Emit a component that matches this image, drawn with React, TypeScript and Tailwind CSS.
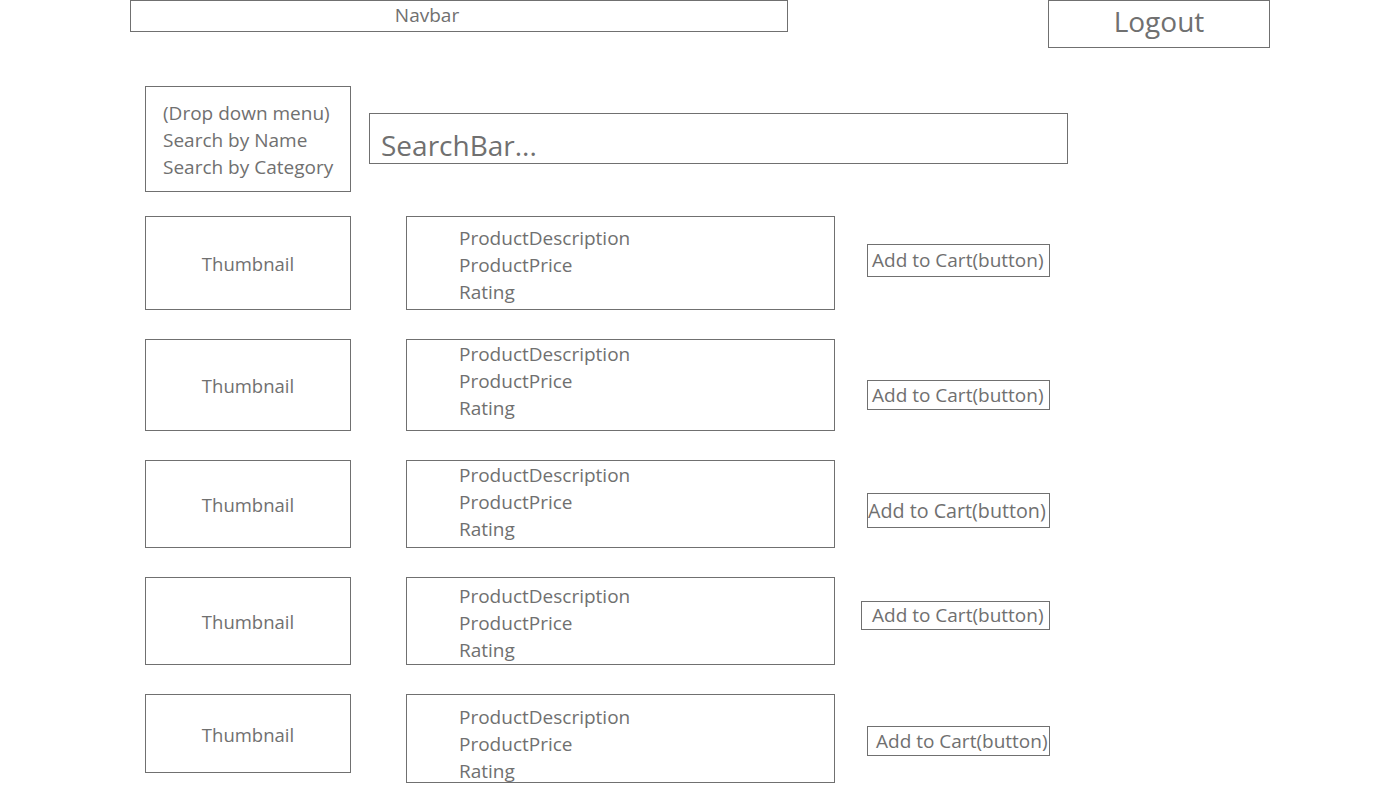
const font = { fontFamily: '"Open Sans", "Noto Sans", sans-serif' };

type Row = {
  mt: string;
  thumbH: string;
  descH: string;
  descPt: string;
  btnMt: string;
  btnH: string;
  btnMl: string;
  btnW: string;
  btnText: string;
  btnPl: string;
};

const rows: Row[] = [
  { mt: "mt-[24px]", thumbH: "h-[94px]", descH: "h-[94px]", descPt: "pt-[8px]", btnMt: "mt-[28px]", btnH: "h-[33px]", btnMl: "ml-[32px]", btnW: "w-[183px]", btnText: "text-[19px]", btnPl: "pl-[4px]" },
  { mt: "mt-[29px]", thumbH: "h-[92px]", descH: "h-[92px]", descPt: "pt-[1px]", btnMt: "mt-[41px]", btnH: "h-[30px]", btnMl: "ml-[32px]", btnW: "w-[183px]", btnText: "text-[19px]", btnPl: "pl-[4px]" },
  { mt: "mt-[29px]", thumbH: "h-[88px]", descH: "h-[88px]", descPt: "pt-[1px]", btnMt: "mt-[33px]", btnH: "h-[35px]", btnMl: "ml-[32px]", btnW: "w-[183px]", btnText: "text-[19.7px]", btnPl: "pl-0" },
  { mt: "mt-[29px]", thumbH: "h-[88px]", descH: "h-[88px]", descPt: "pt-[5px]", btnMt: "mt-[24px]", btnH: "h-[29px]", btnMl: "ml-[26px]", btnW: "w-[189px]", btnText: "text-[19px]", btnPl: "pl-[10px]" },
  { mt: "mt-[29px]", thumbH: "h-[79px]", descH: "h-[89px]", descPt: "pt-[9px]", btnMt: "mt-[32px]", btnH: "h-[30px]", btnMl: "ml-[32px]", btnW: "w-[183px]", btnText: "text-[19px]", btnPl: "pl-[8px]" },
];

const ProductRow = ({ row }: { row: Row }) => {
  return (
    <div className={`flex items-start ml-[145px] ${row.mt}`}>
      {/* Thumbnail */}
      <div className={`w-[206px] ${row.thumbH} border border-[#707070] flex items-center justify-center text-[18.5px] text-[#707070] pt-[2px]`}>
        Thumbnail
      </div>

      {/* Product info */}
      <div className={`ml-[55px] w-[429px] ${row.descH} ${row.descPt} border border-[#707070] pl-[52px] text-[19px] leading-[27px] text-[#707070] overflow-hidden`}>
        <div>ProductDescription</div>
        <div>ProductPrice</div>
        <div>Rating</div>
      </div>

      {/* Add to cart */}
      <button
        className={`${row.btnMl} ${row.btnMt} ${row.btnW} ${row.btnH} ${row.btnPl} ${row.btnText} border border-[#707070] text-[#707070] flex items-center whitespace-nowrap overflow-hidden leading-none`}
      >
        Add to Cart(button)
      </button>
    </div>
  );
};

export default function App() {
  return (
    <div className="w-[1400px] h-[800px] bg-white overflow-hidden" style={font}>
      {/* Header */}
      <div className="flex items-start">
        <div className="ml-[130px] w-[658px] h-[32px] border border-[#707070] flex justify-center items-center pr-[64px] text-[19px] text-[#707070] leading-none pb-[1px]">
          Navbar
        </div>
        <button className="ml-[260px] w-[222px] h-[48px] border border-[#707070] text-[28px] text-[#707070] flex justify-center items-center leading-none pb-[7px]">
          Logout
        </button>
      </div>

      {/* Search */}
      <div className="flex items-start mt-[38px]">
        <div className="ml-[145px] w-[206px] h-[106px] border border-[#707070] pl-[17px] pt-[13px] text-[19px] leading-[27px] text-[#707070] whitespace-nowrap">
          <div>(Drop down menu)</div>
          <div>Search by Name</div>
          <div>Search by Category</div>
        </div>
        <div className="ml-[18px] mt-[27px] w-[699px] h-[51px] border border-[#707070] flex items-end pl-[11px] pb-0 text-[28px] text-[#707070] leading-[36px]">
          SearchBar...
        </div>
      </div>

      {/* Products */}
      {rows.map((row, i) => (
        <ProductRow key={i} row={row} />
      ))}
    </div>
  );
}
